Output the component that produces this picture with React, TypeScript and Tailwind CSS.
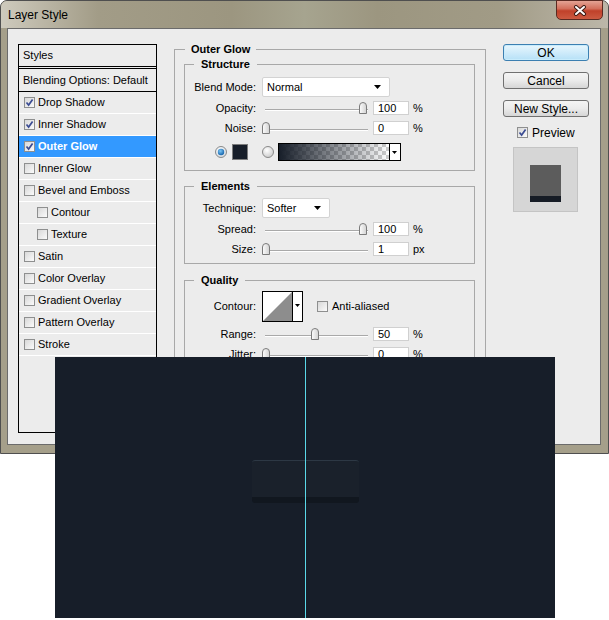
import React from 'react';
import clsx from 'clsx';

const STYLES = [
  { label: 'Drop Shadow', checked: true },
  { label: 'Inner Shadow', checked: true },
  { label: 'Outer Glow', checked: true, active: true },
  { label: 'Inner Glow' },
  { label: 'Bevel and Emboss' },
  { label: 'Contour', nested: true },
  { label: 'Texture', nested: true },
  { label: 'Satin' },
  { label: 'Color Overlay' },
  { label: 'Gradient Overlay' },
  { label: 'Pattern Overlay' },
  { label: 'Stroke' },
];

function Check({ checked = false }: { checked?: boolean }) {
  return (
    <span className="flex h-[11px] w-[11px] shrink-0 items-center justify-center border border-[#8e8f8f] bg-linear-to-br from-[#d8d8d8] to-[#fbfbfb]">
      {checked && (
        <svg width="9" height="9" viewBox="0 0 9 9">
          <path d="M1.5 4.5 L3.6 7 L7.6 1.5" fill="none" stroke="#3b4c93" strokeWidth="1.7" />
        </svg>
      )}
    </span>
  );
}

function Arrow() {
  return (
    <svg width="7" height="4" viewBox="0 0 7 4">
      <path d="M0 0 H7 L3.5 4 Z" fill="#000" />
    </svg>
  );
}

function Select({ value, width }: { value: string; width: string }) {
  return (
    <div className={clsx('flex h-[20px] items-center justify-between rounded-[2px] border border-[#d3d3d3] bg-white pl-[4px] pr-[8px]', width)}>
      <span>{value}</span>
      <Arrow />
    </div>
  );
}

function Slider({ value }: { value: number }) {
  return (
    <div className="relative h-[14px] w-[108px] shrink-0">
      <div className="absolute left-[3px] top-[8px] h-[2px] w-[103px] border-t border-[#a9a9a9] bg-white" />
      <svg
        className="absolute top-[1px]"
        style={{ left: Math.round((value / 100) * 97) }}
        width="8"
        height="12"
        viewBox="0 0 8 12"
      >
        <defs>
          <linearGradient id="thumb" x1="0" y1="0" x2="1" y2="0">
            <stop offset="0" stopColor="#fdfdfd" />
            <stop offset="1" stopColor="#d2d2d2" />
          </linearGradient>
        </defs>
        <path d="M0.5 11.5 V4 Q0.5 0.5 4 0.5 Q7.5 0.5 7.5 4 V11.5 Z" fill="url(#thumb)" stroke="#7b7b7b" />
      </svg>
    </div>
  );
}

function Num({ value }: { value: string }) {
  return (
    <div className="ml-[3px] flex h-[14px] w-[36px] items-center border border-[#d0d0d0] bg-white pl-[4px]">
      {value}
    </div>
  );
}

function SliderRow({ label, value, num, unit, className }: { label: string; value: number; num: string; unit: string; className?: string }) {
  return (
    <div className={clsx('flex h-[14px] items-center', className)}>
      <span className="w-[71px] text-right">{label}</span>
      <span className="w-[6px]" />
      <Slider value={value} />
      <Num value={num} />
      <span className="ml-[4px]">{unit}</span>
    </div>
  );
}

function Radio({ on = false }: { on?: boolean }) {
  return (
    <svg width="12" height="12" viewBox="0 0 12 12" className="shrink-0">
      <defs>
        <radialGradient id={on ? 'rOn' : 'rOff'} cx="0.4" cy="0.35" r="0.7">
          <stop offset="0" stopColor="#ffffff" />
          <stop offset="1" stopColor={on ? '#cfd6dc' : '#c9c9c9'} />
        </radialGradient>
        <radialGradient id="dot" cx="0.4" cy="0.35" r="0.7">
          <stop offset="0" stopColor="#7cc6f5" />
          <stop offset="1" stopColor="#0f5ea8" />
        </radialGradient>
      </defs>
      <circle cx="6" cy="6" r="5.5" fill={on ? 'url(#rOn)' : 'url(#rOff)'} stroke="#8a8a8a" />
      {on && <circle cx="6" cy="6" r="3.2" fill="url(#dot)" />}
    </svg>
  );
}

function GradientPick() {
  return (
    <svg width="123" height="18" viewBox="0 0 123 18" className="ml-[4px] shrink-0">
      <defs>
        <pattern id="chk" width="8" height="8" patternUnits="userSpaceOnUse">
          <rect width="8" height="8" fill="#ffffff" />
          <rect width="4" height="4" fill="#cccccc" />
          <rect x="4" y="4" width="4" height="4" fill="#cccccc" />
        </pattern>
        <linearGradient id="fade" x1="0" y1="0" x2="1" y2="0">
          <stop offset="0" stopColor="#171e29" stopOpacity="1" />
          <stop offset="1" stopColor="#171e29" stopOpacity="0" />
        </linearGradient>
      </defs>
      <rect x="1" y="1" width="110" height="16" fill="url(#chk)" />
      <rect x="1" y="1" width="110" height="16" fill="url(#fade)" />
      <rect x="111" y="1" width="11" height="16" fill="#fff" />
      <path d="M114 8 H119 L116.5 11 Z" fill="#000" />
      <line x1="111.5" y1="1" x2="111.5" y2="17" stroke="#000" />
      <rect x="0.5" y="0.5" width="122" height="17" fill="none" stroke="#000" />
    </svg>
  );
}

function ContourPick() {
  return (
    <svg width="41" height="31" viewBox="0 0 41 31" className="shrink-0">
      <rect x="0.5" y="0.5" width="40" height="30" fill="#fff" stroke="#000" />
      <path d="M1 30 L30 1 V30 Z" fill="#8d8d8d" />
      <line x1="30.5" y1="0" x2="30.5" y2="31" stroke="#000" />
      <path d="M33 13 H38 L35.5 16 Z" fill="#000" />
    </svg>
  );
}

function Button({ label, primary = false, className }: { label: string; primary?: boolean; className?: string }) {
  return (
    <div
      className={clsx(
        'flex h-[17px] w-[86px] items-center justify-center rounded-[3px] border text-[12px] leading-none',
        primary
          ? 'border-[#3c7fb1] bg-linear-to-b from-[#e8f6fd] to-[#b6e1f7] shadow-[inset_0_0_0_1px_#c8ecfc]'
          : 'border-[#707070] bg-linear-to-b from-[#f4f4f4] via-[#ebebeb] to-[#d6d6d6]',
        className,
      )}
    >
      {label}
    </div>
  );
}

export default function App() {
  return (
    <div className="relative h-[620px] w-[609px] overflow-hidden bg-white font-['Liberation_Sans',Arial,sans-serif] text-[11px] text-black">
      {/* window frame */}
      <div className="flex h-[454px] w-[609px] flex-col rounded-t-[7px] border border-[#4f4f4f] bg-[#a59f8a]">
        <div className="flex h-[27px] shrink-0 items-start justify-between rounded-t-[6px] bg-[linear-gradient(90deg,#cecabd_0%,#a29c87_16%,#9c9680_38%,#a6a48f_50%,#9c9680_62%,#a19b86_82%,#bcb7a9_100%)]">
          <span className="ml-[7px] mt-[7px] text-[12px] leading-[14px]">Layer Style</span>
          <div className="-mt-px mr-[5px] flex h-[20px] w-[47px] items-center justify-center rounded-b-[5px] border border-[#5a2a22] bg-[linear-gradient(180deg,#e4a394_0%,#d3705c_42%,#c0412a_55%,#cc5a41_100%)]">
            <svg width="14" height="11" viewBox="0 0 14 11">
              <path d="M3 2 L11 9 M11 2 L3 9" stroke="#3d1b15" strokeWidth="4" strokeLinecap="round" />
              <path d="M3 2 L11 9 M11 2 L3 9" stroke="#ffffff" strokeWidth="2" strokeLinecap="round" />
            </svg>
          </div>
        </div>

        <div className="ml-[6px] mr-[7px] flex h-[417px] items-start border border-[#6b6b6b] bg-[#ececec] pl-[10px] pt-[15px]">
          {/* styles list */}
          <div className="flex h-[389px] w-[139px] shrink-0 flex-col border border-black">
            <div className="flex h-[24px] items-center border-b-[3px] border-double border-black pl-[4px]">Styles</div>
            <div className="flex h-[23px] items-center border-b border-black pl-[4px]">Blending Options: Default</div>
            {STYLES.map((s) => (
              <div
                key={s.label}
                className={clsx(
                  'flex h-[22px] items-center gap-[3px] border-b border-white',
                  s.nested ? 'pl-[18px]' : 'pl-[5px]',
                  s.active && 'bg-[#3399ff] font-bold text-white',
                )}
              >
                <Check checked={s.checked} />
                <span>{s.label}</span>
              </div>
            ))}
          </div>

          {/* settings */}
          <fieldset className="-mt-px ml-[17px] h-[392px] w-[312px] shrink-0 border border-[#a8a8a8] pl-[9px] pr-[10px]">
            <legend className="ml-px px-[6px] font-bold leading-[13px]">Outer Glow</legend>

            <fieldset className="mt-[2px] w-[291px] border border-[#a8a8a8] pb-[9px] pt-[6px]">
              <legend className="ml-[9px] px-[7px] font-bold leading-[13px]">Structure</legend>
              <div className="flex h-[20px] items-center">
                <span className="w-[71px] text-right">Blend Mode:</span>
                <span className="w-[6px]" />
                <Select value="Normal" width="w-[128px]" />
              </div>
              <SliderRow className="mt-[4px]" label="Opacity:" value={100} num="100" unit="%" />
              <SliderRow className="mt-[6px]" label="Noise:" value={0} num="0" unit="%" />
              <div className="mt-[8px] flex h-[18px] items-center pl-[30px]">
                <Radio on />
                <span className="ml-[5px] h-[16px] w-[16px] border border-[#7d7d7d] bg-[#171e29]" />
                <span className="ml-[14px]">
                  <Radio />
                </span>
                <GradientPick />
              </div>
            </fieldset>

            <fieldset className="mt-[9px] w-[291px] border border-[#a8a8a8] pb-[7px] pt-[5px]">
              <legend className="ml-[9px] px-[7px] font-bold leading-[13px]">Elements</legend>
              <div className="flex h-[20px] items-center">
                <span className="w-[71px] text-right">Technique:</span>
                <span className="w-[6px]" />
                <Select value="Softer" width="w-[68px]" />
              </div>
              <SliderRow className="mt-[4px]" label="Spread:" value={100} num="100" unit="%" />
              <SliderRow className="mt-[6px]" label="Size:" value={0} num="1" unit="px" />
            </fieldset>

            <fieldset className="mt-[10px] w-[291px] border border-[#a8a8a8] pb-[40px] pt-[4px]">
              <legend className="ml-[9px] px-[7px] font-bold leading-[13px]">Quality</legend>
              <div className="flex h-[31px] items-center">
                <span className="w-[71px] text-right">Contour:</span>
                <span className="w-[6px]" />
                <ContourPick />
                <span className="ml-[14px]">
                  <Check />
                </span>
                <span className="ml-[4px]">Anti-aliased</span>
              </div>
              <SliderRow className="mt-[5px]" label="Range:" value={50} num="50" unit="%" />
              <SliderRow className="mt-[6px]" label="Jitter:" value={0} num="0" unit="%" />
            </fieldset>
          </fieldset>

          {/* buttons */}
          <div className="ml-[17px] flex w-[86px] shrink-0 flex-col">
            <Button label="OK" primary />
            <Button label="Cancel" className="mt-[11px]" />
            <Button label="New Style..." className="mt-[11px]" />
            <div className="ml-[14px] mt-[10px] flex h-[11px] items-center gap-[4px] text-[12px]">
              <Check checked />
              <span>Preview</span>
            </div>
            <div className="ml-[10px] mt-[9px] flex h-[65px] w-[65px] justify-center border border-[#c4c4c4] bg-[#d6d6d6] pt-[17px]">
              <div className="flex h-[37px] w-[31px] flex-col bg-[#5c5c5c]">
                <div className="flex-1" />
                <div className="h-[6px] bg-[#161c25]" />
              </div>
            </div>
          </div>
        </div>
      </div>

      {/* canvas preview laid over the dialog */}
      <div className="absolute left-[55px] top-[357px] flex h-[261px] w-[500px] items-center justify-center bg-[#171e29] pb-[12px]">
        <div className="flex h-[43px] w-[107px] flex-col rounded-[3px] bg-[#11171f]">
          <div className="h-[37px] rounded-t-[3px] border-t border-[#2d3844] bg-[#1a212b]" />
        </div>
        <div className="absolute left-[250px] top-0 h-full w-px bg-[#5ad8e8]" />
      </div>
    </div>
  );
}
